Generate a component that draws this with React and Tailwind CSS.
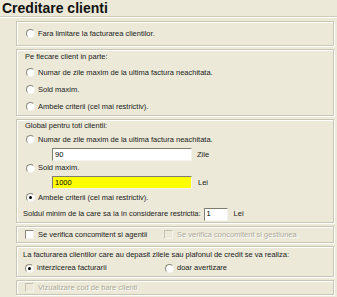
import React from "react";

const Radio = ({ checked }) => (
  <span className="relative inline-block w-[9px] h-[9px] shrink-0 rounded-full bg-white border border-t-[#8a877a] border-l-[#8a877a] border-r-[#f4f3ee] border-b-[#f4f3ee]">
    {checked && <span className="absolute left-[2px] top-[2px] w-[3px] h-[3px] rounded-full bg-black" />}
  </span>
);

const Check = ({ disabled }) => (
  <span
    className={
      "inline-block w-[9px] h-[9px] shrink-0 border border-t-[#8a877a] border-l-[#8a877a] border-r-[#f4f3ee] border-b-[#f4f3ee] " +
      (disabled ? "bg-[#ece9d8] border-t-[#c4c1b3] border-l-[#c4c1b3]" : "bg-white")
    }
  />
);

const Box = ({ className = "", children }) => (
  <div className={"w-[318px] border border-[#c9c6b6] shadow-[inset_1px_1px_0_#ffffff,1px_1px_0_#ffffff] " + className}>
    {children}
  </div>
);

const Input = ({ value, className = "" }) => (
  <div
    className={
      "h-[13px] border border-t-[#7f7d70] border-l-[#7f7d70] border-r-[#f4f3ee] border-b-[#f4f3ee] flex items-center pl-[2px] text-[7.5px] text-black " +
      className
    }
  >
    {value}
  </div>
);

export default function App() {
  return (
    <div className="w-[337px] h-[297px] bg-[#ece9d8] font-['Liberation_Sans',Arial,sans-serif] text-[7.5px] text-[#1a1a1a] overflow-hidden">
      <div className="h-[16px] pl-[2px] text-[14px] font-bold leading-[16px] text-[#111]">Creditare clienti</div>
      <div className="h-px bg-[#cfccbc]" />
      <div className="h-px bg-white" />
      <div className="pl-[16px] pt-[3px] flex flex-col gap-[3px]">
        {/* Box 1 */}
        <Box className="h-[25px] flex items-center">
          <div className="flex items-center pl-[9px] gap-[3px]">
            <Radio />
            <span>Fara limitare la facturarea clientilor.</span>
          </div>
        </Box>

        {/* Box 2 */}
        <Box className="h-[67px] flex flex-col">
          <div className="h-[14px] flex items-center pl-[8px]">Pe fiecare client in parte:</div>
          <div className="h-[17px] flex items-center pl-[9px] gap-[3px]">
            <Radio />
            <span>Numar de zile maxim de la ultima factura neachitata.</span>
          </div>
          <div className="h-[17px] flex items-center pl-[9px] gap-[3px]">
            <Radio />
            <span>Sold maxim.</span>
          </div>
          <div className="h-[17px] flex items-center pl-[9px] gap-[3px]">
            <Radio />
            <span>Ambele criterii (cel mai restrictiv).</span>
          </div>
        </Box>

        {/* Box 3 */}
        <Box className="h-[104px] flex flex-col">
          <div className="h-[12px] flex items-center pl-[8px]">Global pentru toti clientii:</div>
          <div className="h-[15px] flex items-center pl-[9px] gap-[3px]">
            <Radio />
            <span>Numar de zile maxim de la ultima factura neachitata.</span>
          </div>
          <div className="mt-px flex items-center pl-[35px]">
            <Input value="90" className="w-[140px] bg-white" />
            <span className="ml-[5px]">Zile</span>
          </div>
          <div className="h-[14px] flex items-center pl-[9px] gap-[3px]">
            <Radio />
            <span>Sold maxim.</span>
          </div>
          <div className="mt-px flex items-center pl-[35px]">
            <Input value="1000" className="w-[140px] bg-[#ffff00]" />
            <span className="ml-[6px]">Lei</span>
          </div>
          <div className="h-[17px] flex items-center pl-[9px] gap-[3px]">
            <Radio checked />
            <span>Ambele criterii (cel mai restrictiv).</span>
          </div>
          <div className="h-[16px] flex items-center pl-[6px]">
            <span>Soldul minim de la care sa ia in considerare restrictia:</span>
            <Input value="1" className="w-[24px] bg-white ml-[3px]" />
            <span className="ml-[6px]">Lei</span>
          </div>
        </Box>

        {/* Box 4 */}
        <Box className="h-[17px] flex items-center">
          <div className="flex items-center pl-[8px] gap-[4px] w-[147px]">
            <Check />
            <span>Se verifica concomitent si agentii</span>
          </div>
          <div className="flex items-center gap-[4px] text-[#aca899] [text-shadow:1px_1px_0_#ffffff]">
            <Check disabled />
            <span>Se verifica concomitent si gestiunea</span>
          </div>
        </Box>

        {/* Box 5 */}
        <Box className="h-[31px] flex flex-col">
          <div className="h-[15px] flex items-center pl-[6px]">
            La facturarea clientilor care au depasit zilele sau plafonul de credit se va realiza:
          </div>
          <div className="h-[12px] flex items-center">
            <div className="flex items-center pl-[8px] gap-[3px] w-[148px]">
              <Radio checked />
              <span>interzicerea facturarii</span>
            </div>
            <div className="flex items-center gap-[3px]">
              <Radio />
              <span>doar avertizare</span>
            </div>
          </div>
        </Box>

        {/* Box 6 */}
        <Box className="h-[15px] flex items-center">
          <div className="flex items-center pl-[8px] gap-[4px] text-[#aca899] [text-shadow:1px_1px_0_#ffffff]">
            <Check disabled />
            <span>Vizualizare cod de bare clienti</span>
          </div>
        </Box>
      </div>
    </div>
  );
}
